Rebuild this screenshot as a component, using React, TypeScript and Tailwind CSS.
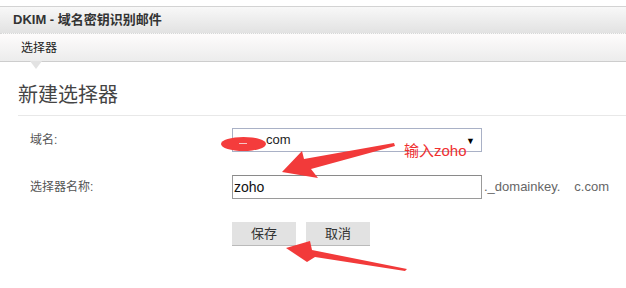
import React from "react";

const font = { fontFamily: '"Liberation Sans", "Noto Sans CJK SC", sans-serif' };

export default function App() {
  return (
    <div
      className="relative w-[626px] h-[288px] bg-white overflow-hidden text-[#333]"
      style={font}
    >
      {/* top gap */}
      <div className="h-[7px] border-b border-[#d3d3d3]" />

      {/* title bar */}
      <div className="h-[27px] flex items-center px-[13px] bg-gradient-to-b from-[#f8f8f8] to-[#e2e2e2] border-b border-dotted border-[#d8d8d8]">
        <span className="text-[13px] font-bold text-[#333]">DKIM - 域名密钥识别邮件</span>
      </div>

      {/* tab bar */}
      <div className="relative h-[28px] flex items-center pl-[21px] bg-gradient-to-b from-[#fefcfc] to-[#ececec] border-b border-[#cdcdcd]">
        <span className="text-[12px] text-[#222]">选择器</span>
        <div className="absolute left-[30px] top-[27px] w-0 h-0 border-l-[6px] border-r-[6px] border-t-[8px] border-l-transparent border-r-transparent border-t-[#e2e2e2]" />
      </div>

      {/* heading */}
      <div className="ml-[18px] pt-[20px] pb-[6px] border-b border-[#e8e8e8]">
        <h1 className="text-[20px] leading-[27px] text-[#444]">新建选择器</h1>
      </div>

      {/* form */}
      <div className="mt-[12px] flex flex-col gap-[23px]">
        <div className="flex items-center">
          <div className="w-[232px] shrink-0 pl-[30px] text-[12px] text-[#555]">域名:</div>
          <div className="relative w-[250px] shrink-0 h-[24px] border border-[#a9b1c6] flex items-center pl-[33px] text-[13px] text-[#222]">
            <span>com</span>
            <span className="absolute right-[6px] top-[6px] text-[9px] text-black">▼</span>
          </div>
        </div>

        <div className="flex items-center">
          <div className="w-[232px] shrink-0 pl-[30px] text-[12px] text-[#555]">选择器名称:</div>
          <div className="w-[250px] shrink-0 h-[24px] border border-[#9a9a9a] border-t-[#8a8a8a] flex items-center pl-[1px] text-[14px] text-[#111]">
            zoho
          </div>
          <div className="ml-[2px] text-[13px] text-[#666] flex whitespace-nowrap">
            <span>._domainkey.</span>
            <span className="w-[14px] shrink-0" />
            <span>c.com</span>
          </div>
        </div>

        <div className="flex gap-[10px] pl-[232px]">
          <button className="w-[64px] h-[24px] bg-[#e2e2e2] border-b border-[#bababa] text-[13px] text-[#333]">保存</button>
          <button className="w-[64px] h-[24px] bg-[#e2e2e2] border-b border-[#bababa] text-[13px] text-[#333]">取消</button>
        </div>
      </div>

      {/* annotations */}
      <div className="absolute left-[221px] top-[137px] w-[45px] h-[14px] rounded-[50%] bg-[#f43c3c]" />
      <div className="absolute left-[239px] top-[143px] w-[8px] h-[1px] bg-[#f6c4c4]" />
      <span className="absolute left-[404px] top-[142px] text-[15px] leading-[18px] text-[#f03030]">输入zoho</span>
      <svg className="absolute left-0 top-0" width="626" height="288" viewBox="0 0 626 288">
        <polygon points="394,143 304,159 302,151 282,172 318,178 311,169 395,146" fill="#f23a3a" />
        <polygon points="286,248 310,241 312,250 407,269 405,271 315,257 307,262" fill="#f23a3a" />
      </svg>
    </div>
  );
}
